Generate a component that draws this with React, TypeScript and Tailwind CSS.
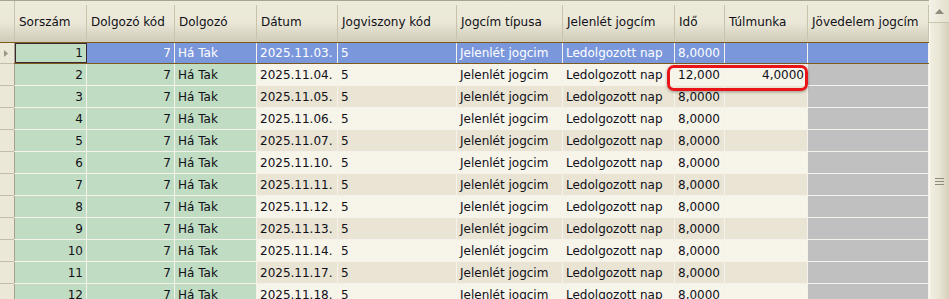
import React from "react";

type Row = { n: number; date: string; ido: string; tul: string };

const dates = ["03", "04", "05", "06", "07", "10", "11", "12", "13", "14", "17", "18"];
const rows: Row[] = dates.map((d, i) => ({
  n: i + 1,
  date: `2025.11.${d}.`,
  ido: i === 1 ? "12,000" : "8,0000",
  tul: i === 1 ? "4,0000" : "",
}));

const headers = [
  { label: "Sorszám", w: "w-[72px]" },
  { label: "Dolgozó kód", w: "w-[88px]" },
  { label: "Dolgozó", w: "w-[82px]" },
  { label: "Dátum", w: "w-[81px]" },
  { label: "Jogviszony kód", w: "w-[119px]" },
  { label: "Jogcím típusa", w: "w-[106px]" },
  { label: "Jelenlét jogcím", w: "w-[112px]" },
  { label: "Idő", w: "w-[50px]" },
  { label: "Túlmunka", w: "w-[83px]" },
  { label: "Jövedelem jogcím", w: "w-[121px]" },
];

const cell = "h-full shrink-0 border-r border-[#f4f2ea] px-[3px] flex items-center whitespace-nowrap overflow-hidden";

const GridRow = ({ r }: { r: Row }) => {
  const sel = r.n === 1;
  const alt = r.n % 2 === 1 ? "bg-[#e9e4d3]" : "bg-[#f7f4ea]";
  const green = "bg-[#c0dcc2]";
  const plain = sel ? "bg-[#7b97dc] text-white" : alt;
  const grey = sel ? "bg-[#7b97dc]" : "bg-[#c0c0c0]";
  return (
    <div
      className={`flex shrink-0 h-[22px] border-b ${sel ? "border-t border-t-[#7d5a1e] border-b-[#7d5a1e] -mt-px" : "border-[#f4f2ea]"}`}
    >
      <div className="w-[15px] shrink-0 h-full bg-[#ebe8d8] border-r border-r-[#a7a08a] flex items-center pl-[3px] relative">
        {sel && (
          <svg width="6" height="9" viewBox="0 0 6 9">
            <path d="M1 1 L5 4.5 L1 8 Z" fill="#9a9688" />
          </svg>
        )}
        <div className="absolute left-0 right-0 -bottom-px h-px bg-[#c3bda8]" />
      </div>
      <div className={`${cell} w-[72px] justify-end ${green} ${sel ? "outline outline-1 -outline-offset-1 outline-[#3a2a30]" : ""}`}>{r.n}</div>
      <div className={`${cell} w-[88px] justify-end ${sel ? "bg-[#7b97dc] text-white" : green}`}>7</div>
      <div className={`${cell} w-[82px] ${sel ? "bg-[#7b97dc] text-white" : green}`}>Há Tak</div>
      <div className={`${cell} w-[81px] ${plain}`}>{r.date}</div>
      <div className={`${cell} w-[119px] ${plain}`}>5</div>
      <div className={`${cell} w-[106px] ${plain}`}>Jelenlét jogcim</div>
      <div className={`${cell} w-[112px] ${plain}`}>Ledolgozott nap</div>
      <div className={`${cell} w-[50px] ${plain}`}>{r.ido}</div>
      <div className={`${cell} w-[83px] justify-end ${plain}`}>{r.tul}</div>
      <div className={`${cell} w-[121px] ${grey}`}></div>
    </div>
  );
};

export default function App() {
  return (
    <div
      className="relative w-[949px] h-[299px] overflow-hidden bg-[#f7f4ea] text-[12px] text-[#101018] flex"
      style={{ fontFamily: '"DejaVu Sans", Tahoma, sans-serif' }}
    >
      <div className="w-[929px] shrink-0 flex flex-col">
        <div className="flex h-[43px] shrink-0 border-t border-[#a8a595] bg-gradient-to-b from-[#ecead9] via-[#ebe8d7] to-[#cfcab8]">
          <div className="w-[15px] shrink-0 h-full border-r border-[#c8c3b0]" />
          {headers.map((h) => (
            <div key={h.label} className={`${h.w} shrink-0 h-full relative flex items-center px-[4px] whitespace-nowrap overflow-hidden`}>
              {h.label}
              <div className="absolute right-0 top-[4px] bottom-[4px] w-px bg-[#c9c3ac]" />
            </div>
          ))}
        </div>
        {rows.map((r) => (
          <GridRow key={r.n} r={r} />
        ))}
      </div>
      <div className="w-[20px] shrink-0 flex flex-col bg-[#f3f1e6]">
        <div className="h-[23px] shrink-0 border-b border-[#c9c4b0] bg-gradient-to-r from-[#f4f2e9] to-[#e4e0cd] flex items-center justify-center">
          <svg width="9" height="5" viewBox="0 0 9 5">
            <path d="M0 5 L4.5 0 L9 5 Z" fill="#8f8b7c" />
          </svg>
        </div>
        <div className="flex-1 border-l border-[#fbf9f1] bg-gradient-to-r from-[#f2efe2] via-[#e9e4d3] to-[#d5cfbb] pt-[155px] flex flex-col items-center gap-[2px]">
          <div className="w-[9px] h-px bg-[#8f8a7a]" />
          <div className="w-[9px] h-px bg-[#8f8a7a]" />
          <div className="w-[9px] h-px bg-[#8f8a7a]" />
        </div>
      </div>
      <div className="absolute left-[667px] top-[65px] w-[141px] h-[26px] rounded-[7px] border-[3px] border-[#e8141a] shadow-[0_1px_3px_rgba(0,0,0,0.35)]" />
    </div>
  );
}
